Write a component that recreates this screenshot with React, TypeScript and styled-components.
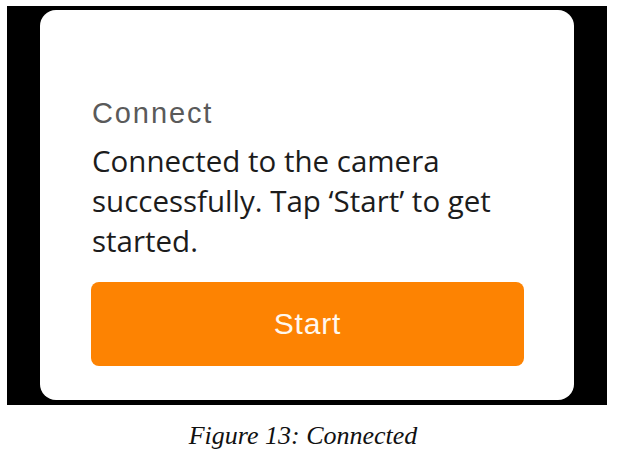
import React from "react";
import styled, { createGlobalStyle } from "styled-components";

const Global = createGlobalStyle`
  html, body { margin: 0; padding: 0; background: #ffffff; }
  body { width: 617px; height: 451px; overflow: hidden; }
`;

const Page = styled.div`
  display: flex;
  flex-direction: column;
  align-items: flex-start;
  padding: 6px 0 0 7px;
`;

const Screen = styled.div`
  width: 600px;
  height: 399px;
  background: #000;
  box-sizing: border-box;
  padding: 4px 33px 5px 33px;
  display: flex;
`;

const Card = styled.div`
  flex: 1;
  background: #fff;
  border-radius: 16px;
  box-sizing: border-box;
  padding: 86px 50px 34px 51px;
  display: flex;
  flex-direction: column;
`;

const Title = styled.div`
  font-family: "Liberation Sans", Arial, sans-serif;
  font-size: 29px;
  line-height: 34px;
  letter-spacing: 1.9px;
  color: #5a5a5a;
  padding-left: 1px;
`;

const Message = styled.div`
  margin-top: 11px;
  font-family: "Open Sans", sans-serif;
  font-size: 29.5px;
  line-height: 40px;
  color: #1c1c1c;
  padding-left: 1px;
`;

const StartButton = styled.button`
  margin-top: 21px;
  height: 84px;
  border: none;
  border-radius: 8px;
  background: #fd8302;
  color: #fff8ee;
  font-family: "Liberation Sans", Arial, sans-serif;
  font-size: 30px;
  letter-spacing: 0.8px;
  padding: 0;
  cursor: pointer;
`;

const Caption = styled.div`
  align-self: stretch;
  margin-top: 16px;
  text-align: center;
  font-family: "Liberation Serif", "Times New Roman", serif;
  font-style: italic;
  font-size: 26px;
  line-height: 30px;
  color: #111;
  padding-right: 18px;
`;

export default function App() {
  return (
    <>
      <Global />
      <Page>
        <Screen>
          <Card>
            <Title>Connect</Title>
            <Message>
              Connected to the camera successfully. Tap ‘Start’ to get started.
            </Message>
            <StartButton>Start</StartButton>
          </Card>
        </Screen>
        <Caption>Figure 13: Connected</Caption>
      </Page>
    </>
  );
}
